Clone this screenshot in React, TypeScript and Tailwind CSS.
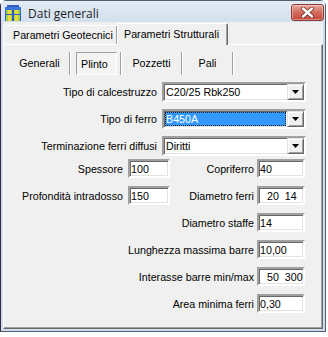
import React from "react";

const sunken =
  "border-2 border-t-[#a0a0a0] border-l-[#a0a0a0] border-b-white border-r-white shadow-[inset_1px_1px_0_#696969,inset_-1px_-1px_0_#e3e3e3]";

function AppIcon() {
  return (
    <svg width="16" height="16" viewBox="0 0 16 16">
      <rect x="2" y="0" width="12" height="2" fill="#2f5fc4" />
      <rect x="0" y="2" width="16" height="3" fill="#3d77dc" />
      <rect x="0" y="5" width="16" height="11" fill="#9fd44a" />
      <rect x="3" y="5" width="3" height="11" fill="#f2d93a" />
      <rect x="10" y="5" width="3" height="11" fill="#f2d93a" />
      <rect x="0" y="5" width="1" height="11" fill="#2f5fc4" />
      <rect x="7" y="5" width="2" height="11" fill="#2f5fc4" />
      <rect x="15" y="5" width="1" height="11" fill="#2f5fc4" />
      <rect x="0" y="9" width="16" height="1" fill="#2f5fc4" />
    </svg>
  );
}

function CloseButton() {
  return (
    <div className="mr-[1px] mt-[3px] flex h-[17px] w-[33px] items-center justify-center rounded-[3px] border border-[#8a3a32] bg-linear-to-b from-[#e9a99a] via-[#d26b5c] to-[#c4463a] shadow-[inset_0_0_0_1px_rgba(255,255,255,0.35)]">
      <svg width="13" height="11" viewBox="0 0 13 11">
        <path d="M2 1.5 L11 9.5 M11 1.5 L2 9.5" stroke="#6b2a24" strokeWidth="4" strokeLinecap="round" />
        <path d="M2 1.5 L11 9.5 M11 1.5 L2 9.5" stroke="#ffffff" strokeWidth="2.4" strokeLinecap="round" />
      </svg>
    </div>
  );
}

function DropButton() {
  return (
    <div className="flex h-full w-[17px] items-center justify-center border border-t-[#e3e3e3] border-l-[#e3e3e3] border-b-[#696969] border-r-[#696969] bg-[#f0f0f0] shadow-[inset_1px_1px_0_#ffffff,inset_-1px_-1px_0_#a0a0a0]">
      <svg width="7" height="4" viewBox="0 0 7 4">
        <path d="M0 0 H7 L3.5 4 Z" fill="#000" />
      </svg>
    </div>
  );
}

function Combo({ value, selected }: { value: string; selected?: boolean }) {
  return (
    <div className={`flex h-[20px] w-[144px] items-stretch bg-white ${sunken}`}>
      <div className="flex flex-1 items-center py-[1px] pl-[1px] pr-[1px]">
        {selected ? (
          <span className="flex h-full w-full items-center bg-[#3399ff] pl-[1px] pt-[1px] text-white outline-1 outline-dotted outline-[#1a1a1a] -outline-offset-1">
            {value}
          </span>
        ) : (
          <span className="pl-[1px] pt-[1px]">{value}</span>
        )}
      </div>
      <DropButton />
    </div>
  );
}

function Field({ value, width, pre }: { value: string; width: string; pre?: boolean }) {
  return (
    <div className={`flex h-[19px] items-center bg-white ${width} ${sunken} ${pre ? "pl-[8px]" : "pl-[1px]"}`}>
      <span className="whitespace-pre pt-[1px]">{value}</span>
    </div>
  );
}

function InnerSep() {
  return <div className="h-[23px] w-[2px] border-l border-l-[#a0a0a0] border-r border-r-white" />;
}

export default function App() {
  const labelFont = "font-['Liberation_Sans',Arial,sans-serif]";
  return (
    <div className={`relative h-[337px] w-[328px] overflow-hidden bg-white text-[10.7px] text-black ${labelFont}`}>
      <div className="flex h-[332px] w-[326px] flex-col rounded-t-[6px] border border-[#50606f] border-l-[#3c2a4a] bg-[#cddbec]">
        {/* title bar */}
        <div className="flex h-[21px] items-start justify-between bg-linear-to-b from-[#e3ebf5] to-[#d3e0ee]">
          <div className="flex items-center gap-[7px] pl-[4px] pt-[4px]">
            <AppIcon />
            <span className="pt-[1px] font-['Open_Sans',sans-serif] text-[12px] leading-[14px] text-[#1e1e1e]">Dati generali</span>
          </div>
          <CloseButton />
        </div>

        {/* client area */}
        <div className="mx-[2px] mb-[2px] flex flex-1 flex-col bg-[#f0f0f0]">
          {/* outer tabs */}
          <div className="flex h-[22px] items-end">
            <div className="flex h-[19px] w-[114px] items-center rounded-tl-[2px] border-l border-t border-white pl-[9px] pt-[1px] shadow-[inset_-1px_0_0_#a0a0a0]">
              Parametri Geotecnici
            </div>
            <div className="relative z-10 -mb-[1px] flex h-[22px] w-[111px] items-center rounded-t-[2px] border-l border-t border-white border-r border-r-[#696969] bg-[#f0f0f0] pl-[6px] shadow-[inset_-1px_0_0_#a0a0a0]">
              Parametri Strutturali
            </div>
          </div>

          {/* tab panel */}
          <div className="flex flex-1 flex-col border-l border-t border-white border-r border-r-[#696969] border-b border-b-[#696969] shadow-[inset_-1px_-1px_0_#a0a0a0]">
            {/* inner tabs */}
            <div className="mt-[7px] flex h-[23px] items-stretch">
              <div className="flex w-[65px] items-center justify-center pl-[6px]">Generali</div>
              <InnerSep />
              <div className="flex w-[49px] items-stretch pl-[5px] pr-[3px]">
                <div className="flex flex-1 items-center border border-t-[#a0a0a0] border-l-[#a0a0a0] border-b-white border-r-white bg-[#f4f4f4] pl-[4px] pt-[2px]">
                  Plinto
                </div>
              </div>
              <InnerSep />
              <div className="flex w-[59px] items-center justify-center">Pozzetti</div>
              <InnerSep />
              <div className="flex w-[49px] items-center justify-center">Pali</div>
              <InnerSep />
            </div>

            {/* form */}
            <div className="mt-[7px] flex flex-col">
              <div className="flex items-center">
                <span className="w-[158px] pr-[5px] pt-[1px] text-right">Tipo di calcestruzzo</span>
                <Combo value="C20/25 Rbk250" />
              </div>
              <div className="mt-[7px] flex items-center">
                <span className="w-[158px] pr-[5px] pt-[1px] text-right">Tipo di ferro</span>
                <Combo value="B450A" selected />
              </div>
              <div className="mt-[7px] flex items-center">
                <span className="w-[158px] pr-[5px] pt-[1px] text-right">Terminazione ferri diffusi</span>
                <Combo value="Diritti" />
              </div>

              <div className="mt-[3px] flex items-center">
                <span className="w-[124px] pr-[5px] pt-[2px] text-right">Spessore</span>
                <Field value="100" width="w-[42px]" />
                <span className="w-[87px] pr-[3px] pt-[2px] text-right">Copriferro</span>
                <Field value="40" width="w-[48px]" />
              </div>
              <div className="mt-[8px] flex items-center">
                <span className="w-[124px] pr-[5px] pt-[2px] text-right">Profondità intradosso</span>
                <Field value="150" width="w-[42px]" />
                <span className="w-[87px] pr-[3px] pt-[2px] text-right">Diametro ferri</span>
                <Field value="20  14" width="w-[48px]" pre />
              </div>
              <div className="mt-[8px] flex items-center">
                <span className="w-[253px] pr-[3px] pt-[2px] text-right">Diametro staffe</span>
                <Field value="14" width="w-[48px]" />
              </div>
              <div className="mt-[8px] flex items-center">
                <span className="w-[253px] pr-[3px] pt-[2px] text-right">Lunghezza massima barre</span>
                <Field value="10,00" width="w-[48px]" />
              </div>
              <div className="mt-[8px] flex items-center">
                <span className="w-[253px] pr-[3px] pt-[2px] text-right">Interasse barre min/max</span>
                <Field value="50  300" width="w-[48px]" pre />
              </div>
              <div className="mt-[8px] flex items-center">
                <span className="w-[253px] pr-[3px] pt-[2px] text-right">Area minima ferri</span>
                <Field value="0,30" width="w-[48px]" />
              </div>
            </div>
          </div>
        </div>
      </div>
    </div>
  );
}
